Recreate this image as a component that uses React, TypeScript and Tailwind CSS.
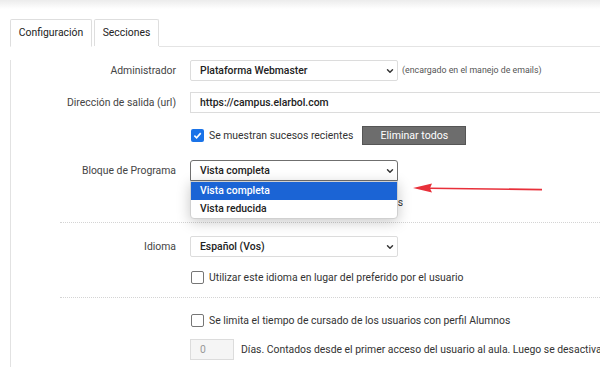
import { ChevronDown } from 'lucide-react';

function Chevron() {
  return <ChevronDown size={10} strokeWidth={3.4} className="shrink-0 text-[#333]" />;
}

function SelectBox({ value, focused = false }: { value: string; focused?: boolean }) {
  return (
    <div
      className={`flex h-[21px] w-[208px] items-center justify-between pl-[9px] pr-[2px] font-medium text-[#222] ${
        focused ? 'rounded-t-[3px] border border-[#6f6f6f]' : 'rounded-[2px] border border-[#dcdcdc]'
      }`}
    >
      <span>{value}</span>
      <Chevron />
    </div>
  );
}

function CheckBox({ checked = false }: { checked?: boolean }) {
  if (checked) {
    return (
      <span className="flex h-[13px] w-[13px] shrink-0 items-center justify-center rounded-[2px] bg-[#1a73e8]">
        <svg width="9" height="9" viewBox="0 0 10 10" fill="none">
          <path d="M1.5 5.2 L4 7.6 L8.6 2.4" stroke="white" strokeWidth="1.8" />
        </svg>
      </span>
    );
  }
  return <span className="h-[13px] w-[13px] shrink-0 rounded-[2px] border border-[#767676] bg-white" />;
}

function Row({ label, className, children }: { label?: string; className: string; children: React.ReactNode }) {
  return (
    <div className={`flex items-center ${className}`}>
      <div className="w-[166px] shrink-0 pr-px text-right text-[#444]">{label}</div>
      <div className="ml-[13px] flex min-w-0 flex-1 items-center">{children}</div>
    </div>
  );
}

function Divider({ className }: { className: string }) {
  return <div className={`ml-[49px] border-t border-dotted border-[#d4d4d4] ${className}`} />;
}

export default function App() {
  return (
    <div
      className="relative h-[367px] w-[600px] overflow-hidden bg-white text-[10.4px] text-[#333]"
      style={{ fontFamily: 'Roboto, "Liberation Sans", sans-serif' }}
    >
      <div className="h-[9px] bg-gradient-to-b from-[#ececec] to-white" />

      <div className="mt-[10px] flex pl-[10px]">
        <div className="flex h-[28px] w-[82px] items-center justify-center rounded-t-[2px] border border-b-white border-[#dedede] text-[#222]">
          Configuración
        </div>
        <div className="ml-[2px] flex h-[27px] w-[65px] items-center justify-center rounded-t-[2px] border border-b-0 border-[#dedede] text-[#222]">
          Secciones
        </div>
        <div className="flex-1 self-end border-b border-[#e4e4e4]" />
      </div>

      <div className="relative ml-[10px] h-[330px] border-l border-[#e2e2e2]">
        <Row label="Administrador" className="mt-[13px] h-[21px]">
          <SelectBox value="Plataforma Webmaster" />
          <span className="ml-[4px] whitespace-nowrap text-[8.8px] text-[#555]">(encargado en el manejo de emails)</span>
        </Row>

        <Row label="Dirección de salida (url)" className="mt-[11px] h-[21px]">
          <div className="flex h-[21px] flex-1 items-center border-y border-l border-[#dcdcdc] pl-[9px] font-medium text-[#222]">
            https://campus.elarbol.com
          </div>
        </Row>

        <Row className="mt-[12px] h-[21px]">
          <div className="ml-px flex items-center gap-[5px] whitespace-nowrap text-[#333]">
            <CheckBox checked />
            <span>Se muestran sucesos recientes</span>
          </div>
          <button className="ml-[9px] h-[19px] w-[104px] border border-[#555] bg-[#6d6d6d] text-[10.6px] text-white">
            Eliminar todos
          </button>
        </Row>

        <Row label="Bloque de Programa" className="mt-[14px] h-[21px]">
          <div className="relative">
            <SelectBox value="Vista completa" focused />
            <div className="absolute left-0 top-[21px] z-10 w-[208px] overflow-hidden rounded-b-[4px] border border-[#d0d0d0] bg-white shadow-[0_3px_14px_rgba(0,0,0,0.22)]">
              <div className="flex h-[18px] items-center bg-[#1b64d5] pl-[9px] font-medium text-white">Vista completa</div>
              <div className="flex h-[18px] items-center pl-[9px] font-medium text-[#222]">Vista reducida</div>
            </div>
          </div>
        </Row>

        <Row className="mt-[11px] h-[21px]">
          <div className="flex w-[213px] justify-end overflow-hidden whitespace-nowrap text-[#333]">
            <span className="shrink-0">Se muestran los contenidos de las secciones ocultas</span>
          </div>
        </Row>

        <Divider className="mt-[9px]" />

        <Row label="Idioma" className="mt-[13px] h-[21px]">
          <SelectBox value="Español (Vos)" />
        </Row>

        <Row className="mt-[10px] h-[21px]">
          <div className="ml-px flex items-center gap-[5px] whitespace-nowrap">
            <CheckBox />
            <span>Utilizar este idioma en lugar del preferido por el usuario</span>
          </div>
        </Row>

        <Divider className="mt-[9px]" />

        <Row className="mt-[12px] h-[21px]">
          <div className="ml-px flex items-center gap-[5px] whitespace-nowrap">
            <CheckBox />
            <span>Se limita el tiempo de cursado de los usuarios con perfil Alumnos</span>
          </div>
        </Row>

        <Row className="mt-[8px] h-[21px]">
          <div className="flex h-[21px] w-[44px] shrink-0 items-center border border-[#dcdcdc] bg-[#f5f5f5] pl-[9px] text-[#999]">
            0
          </div>
          <span className="ml-[7px] whitespace-nowrap">
            Días. Contados desde el primer acceso del usuario al aula. Luego se desactivan
          </span>
        </Row>
      </div>

      <svg className="absolute left-[410px] top-[180px]" width="140" height="16" viewBox="0 0 140 16">
        <line x1="20" y1="8.2" x2="132" y2="9.6" stroke="#e8303a" strokeWidth="1.6" />
        <polygon points="3,8 22,3.5 20,8.2 22,12.5" fill="#e8303a" />
      </svg>
    </div>
  );
}
